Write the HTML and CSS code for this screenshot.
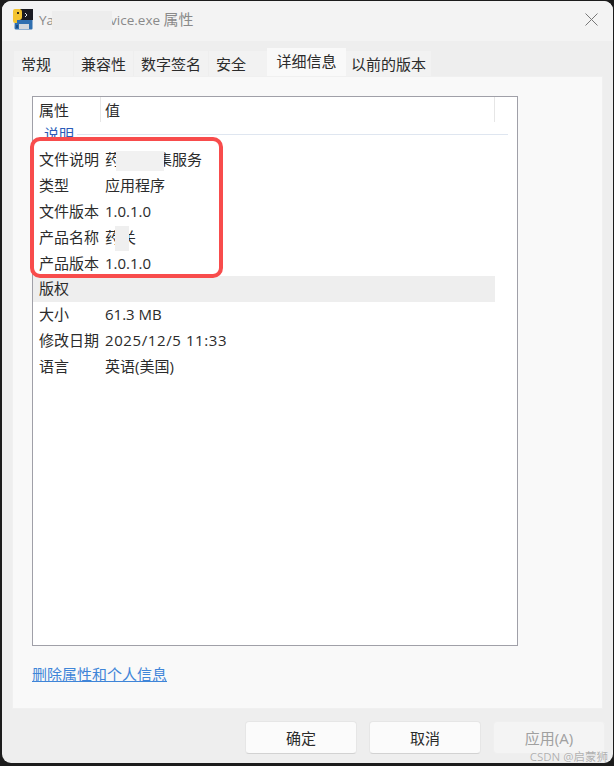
FILE: index.html
```html
<!DOCTYPE html>
<html>

<head>
    <meta charset="UTF-8">
    <title>属性</title>
    <link rel="stylesheet" href="styles.css">
</head>

<body>
    <div class="window">
        <div class="titlebar">
            <svg class="appicon" width="21" height="22" viewBox="0 0 21 22">
                <path d="M3 6h16a1.500 1.500 0 0 1 1.500 1.500v13a1 1 0 0 1-1 1H4a1.500 1.500 0 0 1-1.500-1.500z" fill="#2f6fb0" />
                <rect x="8" y="1" width="13" height="11" fill="#1b1b22" />
                <path d="M1 3q0-2 2-2h4q3 0 3 3v5q0 3-3 3H5v3H3q-2 0-2-2z" fill="#f4c430" />
                <path d="M5 4h2v2H5z" fill="#3a3320" />
                <path d="M13 5l2 2-2 2" fill="none" stroke="#e8e8e8" stroke-width="1" />
                <rect x="7" y="16" width="10" height="5" fill="#d4d8dc" />
                <rect x="4" y="17" width="2" height="3" fill="#1d4f86" />
            </svg>
            <span class="title">Ya<i class="smudge smudge-title"></i>vice.exe <span class="title-cjk">属性</span></span>
            <svg class="close" width="13" height="13" viewBox="0 0 13 13">
                <path d="M.5.500l12 12M12.500.500l-12 12" stroke="#777" stroke-width="1" fill="none" />
            </svg>
        </div>

        <div class="tabs">
            <div class="tab tab-1">常规</div>
            <div class="tab tab-2">兼容性</div>
            <div class="tab tab-3">数字签名</div>
            <div class="tab tab-4">安全</div>
            <div class="tab tab-5 active">详细信息</div>
            <div class="tab tab-6">以前的版本</div>
        </div>

        <div class="panel">
            <div class="list">
                <div class="list-head">
                    <div class="col-name">属性</div>
                    <div class="col-value">值</div>
                    <div class="col-rest"></div>
                </div>
                <div class="group group-first"><span>说明</span><b></b></div>
                <ul class="rows">
                    <li><span class="name">文件说明</span><span class="value">药<i class="smudge smudge-a"></i>集服务</span></li>
                    <li><span class="name">类型</span><span class="value">应用程序</span></li>
                    <li><span class="name">文件版本</span><span class="value">1.0.1.0</span></li>
                    <li><span class="name">产品名称</span><span class="value">药<i class="smudge smudge-b"></i>关</span></li>
                    <li><span class="name">产品版本</span><span class="value">1.0.1.0</span></li>
                    <li class="selected"><span class="name">版权</span><span class="value"></span></li>
                    <li><span class="name">大小</span><span class="value">61.3 MB</span></li>
                    <li><span class="name">修改日期</span><span class="value date">2025/12/5 11:33</span></li>
                    <li><span class="name">语言</span><span class="value">英语(美国)</span></li>
                </ul>
            </div>
            <a class="remove-link" href="#">删除属性和个人信息</a>
        </div>

        <div class="buttons">
            <button>确定</button>
            <button>取消</button>
            <button class="disabled">应用(A)</button>
        </div>
    </div>

    <div class="redbox"></div>
    <div class="watermark">CSDN @启蒙狮</div>
</body>

</html>
```

FILE: styles.css
```css
* {
    box-sizing: border-box;
}

html,
body {
    margin: 0;
    height: 100%;
}

body {
    width: 614px;
    height: 766px;
    padding: 1px 1px 3px 2px;
    background: #1c1c1c;
    font-family: "Open Sans", "Noto Sans CJK SC", sans-serif;
    font-size: 15px;
    color: #2b2b2b;
    overflow: hidden;
    position: relative;
}

.window {
    height: 762px;
    background: #eeeeee;
    border-radius: 9px;
    overflow: hidden;
    display: flex;
    flex-direction: column;
}

.titlebar {
    height: 40px;
    flex: none;
    background: #f3f3f3;
    display: flex;
    align-items: center;
    padding: 0 15px 4px 10px;
}

.appicon {
    flex: none;
}

.title {
    margin-left: 6px;
    color: #8a8a8a;
    font-size: 13.500px;
    flex: 1;
}

.title-cjk {
    font-size: 15px;
}

.smudge {
    display: inline-block;
    position: relative;
    background: #eeeeee;
    vertical-align: middle;
}

.smudge-title {
    width: 60px;
    height: 19px;
    margin: 0 -2px 0 -2px;
    background: #ededed;
}

.smudge-a {
    width: 48px;
    height: 20px;
    margin: 0 -7px 0 -4px;
    background: #f1f1f1;
}

.smudge-b {
    width: 14px;
    height: 25px;
    margin: 0 -8px 0 -5px;
    background: #efefef;
}

.tabs {
    height: 35px;
    flex: none;
    display: flex;
    align-items: flex-end;
    padding-left: 12px;
}

.tab {
    height: 25px;
    background: #f2f2f2;
    text-align: center;
    line-height: 27px;
    margin-right: 1px;
}

.tab-1 { width: 59px; text-align: left; padding-left: 7px; }
.tab-2 { width: 59px; }
.tab-3 { width: 74px; }
.tab-4 { width: 58px; margin-right: 0; text-align: left; padding-left: 7px; }
.tab-5 { width: 79px; margin-right: 0; }
.tab-6 { width: 85px; }

.tab.active {
    height: 28px;
    background: #f9f9f9;
    line-height: 26px;
}

.panel {
    width: 591px;
    height: 633px;
    margin-left: 10px;
    flex: none;
    background: #f9f9f9;
    border: 1px solid #f0f0f0;
    padding: 19px 0 0 19px;
}

.list {
    width: 486px;
    height: 550px;
    background: #fff;
    border: 1px solid #a0a0a8;
}

.list-head {
    display: flex;
    height: 25px;
    line-height: 26px;
}

.col-name {
    width: 68px;
    padding-left: 6px;
    border-right: 1px solid #e6e6e6;
}

.col-value {
    width: 394px;
    padding-left: 4px;
    border-right: 1px solid #e6e6e6;
}

.group {
    height: 15px;
    overflow: hidden;
    position: relative;
    display: flex;
    margin-bottom: 10px;
}

.group span {
    color: #2a5bb8;
    padding-left: 11px;
    line-height: 25px;
    flex: none;
}

.group b {
    display: block;
    height: 1px;
    width: 431px;
    margin: 12px 0 0 3px;
    background: #dfe6f0;
}

.rows {
    list-style-type: none;
    margin: 0;
    padding: 0;
}

.rows li {
    display: flex;
    width: 462px;
    height: 25.900px;
    line-height: 25.900px;
    white-space: nowrap;
}

.rows li.selected {
    background: #eeeeee;
}

.name {
    width: 67px;
    padding-left: 6px;
    flex: none;
}

.value {
    padding-left: 5px;
}

.date {
    letter-spacing: .6px;
}

.remove-link {
    display: inline-block;
    margin-top: 17px;
    color: #3f85d8;
    font-size: 15px;
    text-decoration: underline;
}

.buttons {
    display: flex;
    gap: 12px;
    justify-content: flex-end;
    padding: 12px 8px 0 0;
}

button {
    width: 112px;
    height: 33px;
    background: #fbfbfb;
    border: 1px solid #e6e6e6;
    border-bottom-color: #d2d2d2;
    border-radius: 4px;
    font: inherit;
    color: #2b2b2b;
    padding: 0;
}

button.disabled {
    background: #f4f4f4;
    border-color: #efefef;
    color: #a0a0a0;
}

.redbox {
    position: absolute;
    left: 30px;
    top: 137px;
    width: 193px;
    height: 141px;
    border: 4px solid #f84c4c;
    border-radius: 10px;
}

.watermark {
    position: absolute;
    right: 6px;
    bottom: 3px;
    font-size: 11.500px;
    line-height: 13px;
    color: #b0b0b0;
    text-shadow: 0 0 1px #fff;
}
```
